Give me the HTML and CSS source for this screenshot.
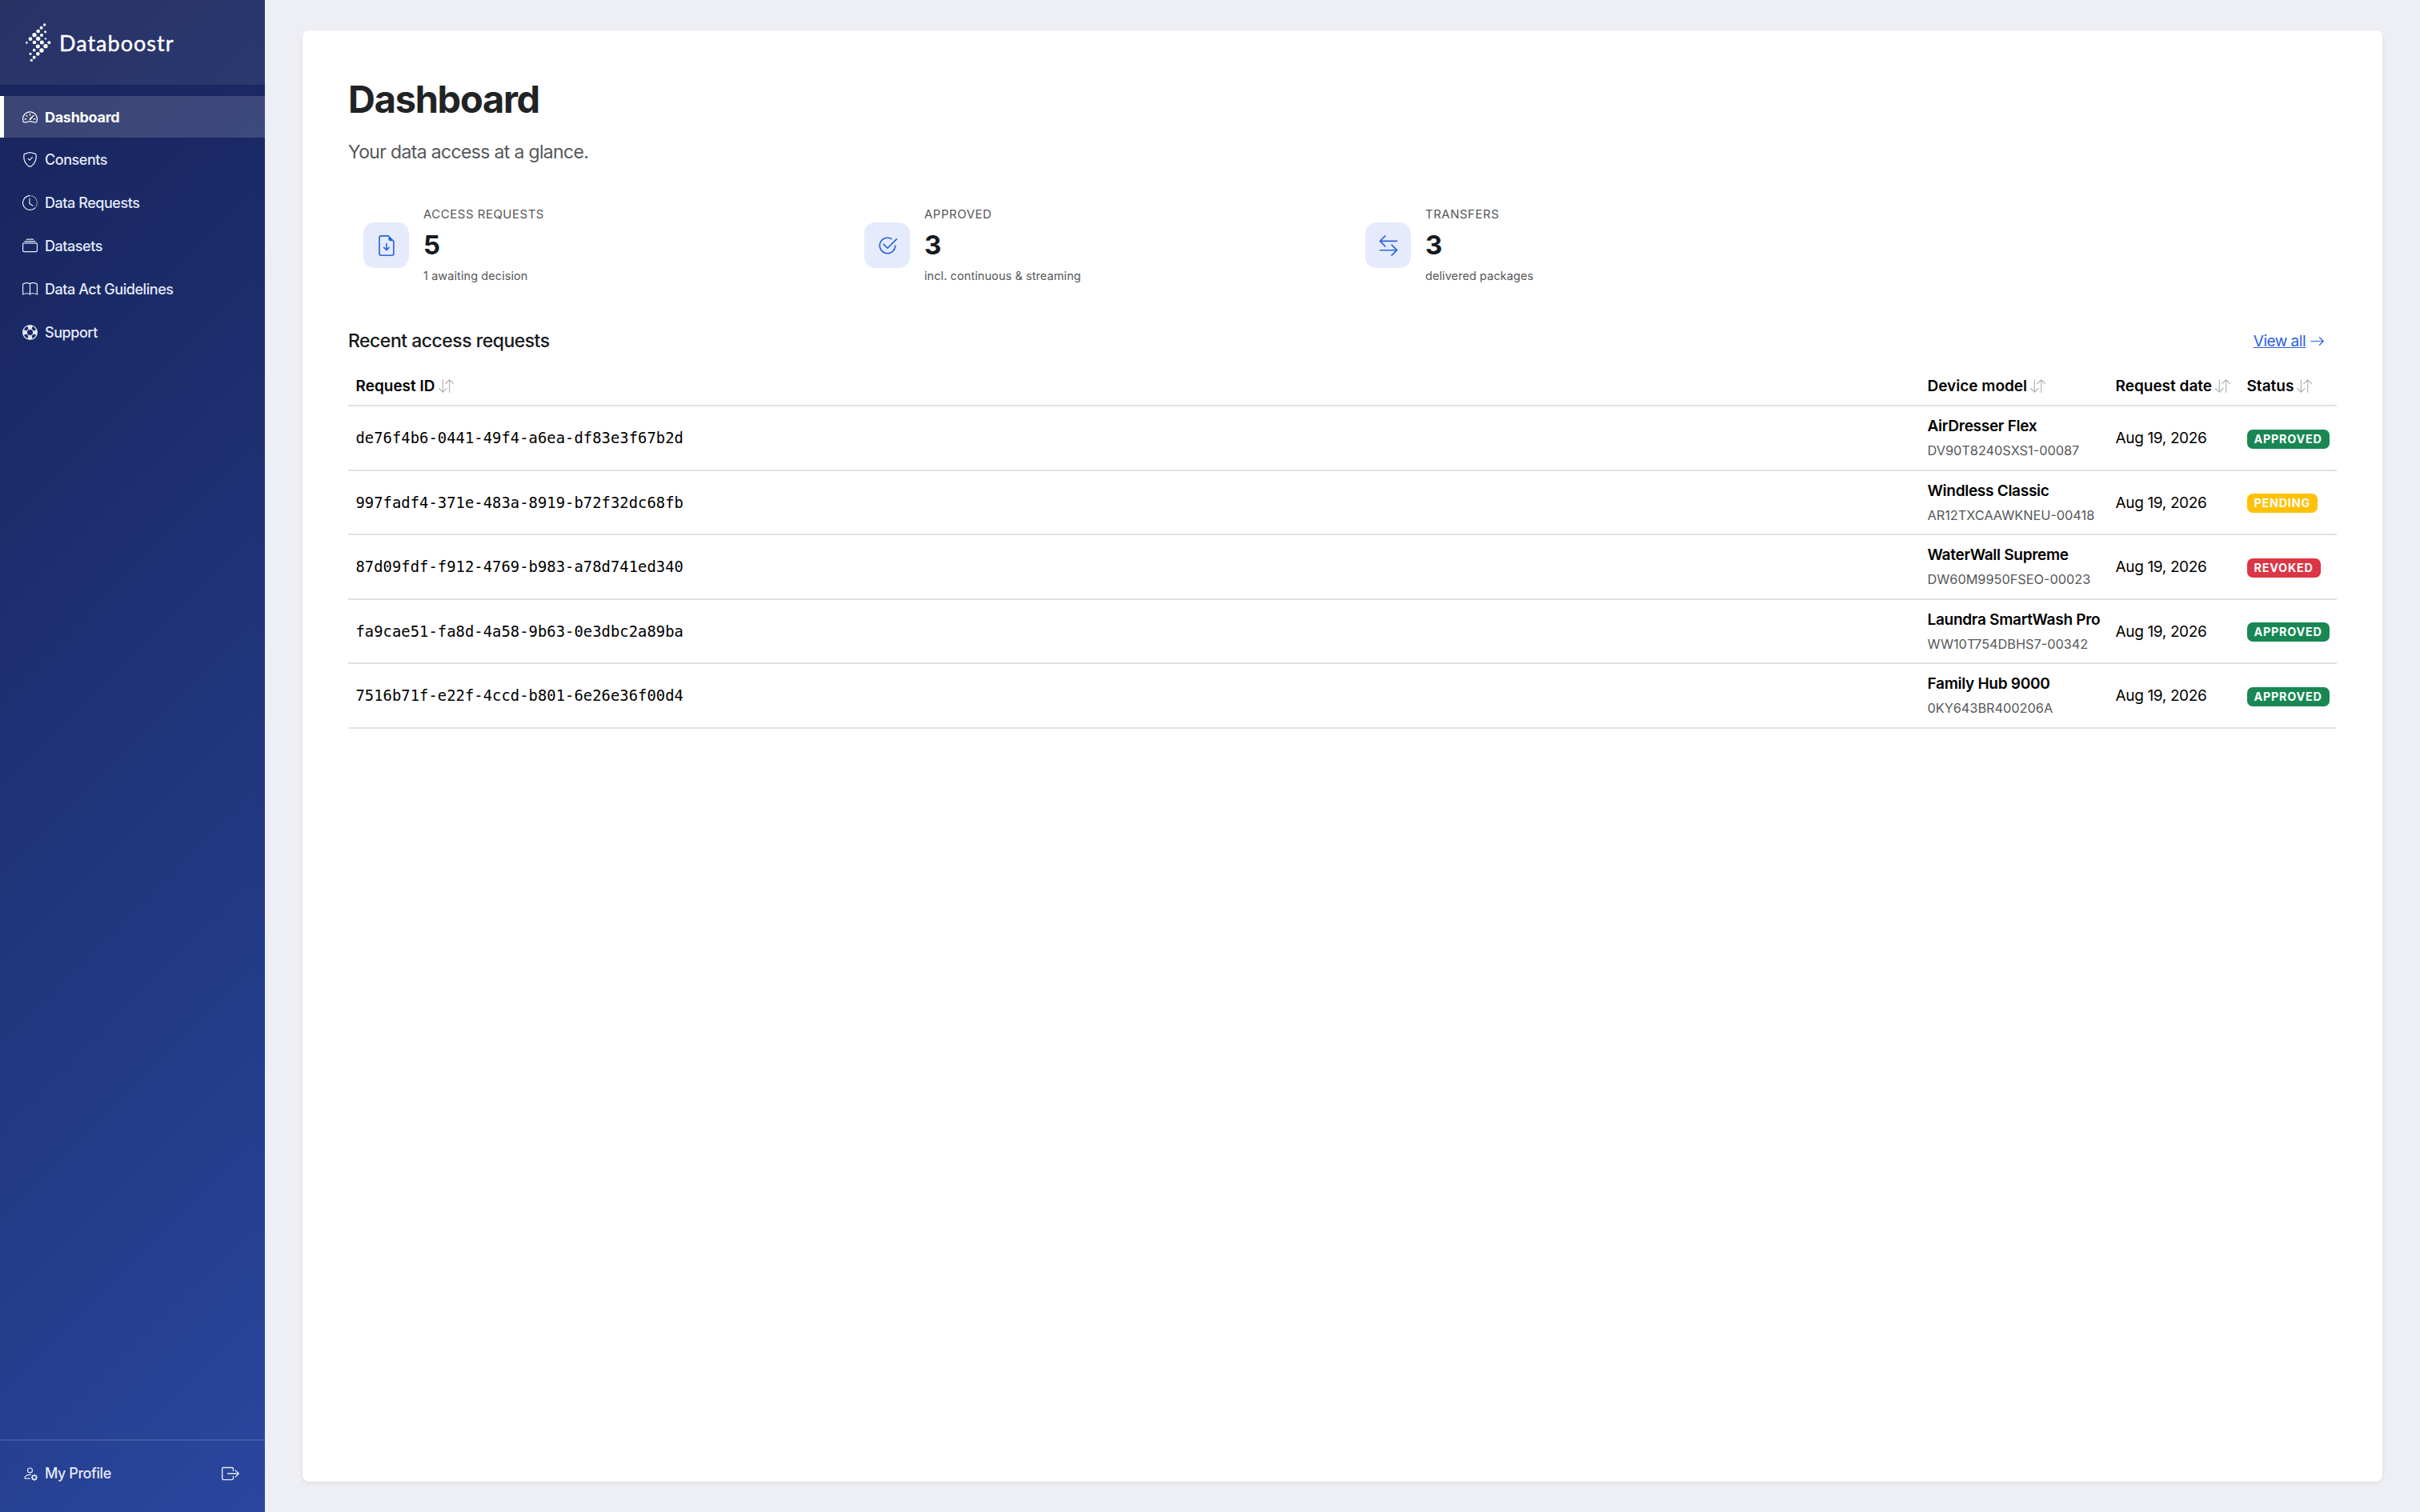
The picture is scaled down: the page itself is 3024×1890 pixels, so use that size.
FILE: index.html
```html
<!DOCTYPE html>
<html lang="en">
<head>
  <meta charset="UTF-8" />
  <meta name="viewport" content="width=device-width, initial-scale=1.0" />
  <title>Dashboard - Databoostr</title>
  <link rel="stylesheet" href="styles.css">
</head>
<body>

  <!-- Icon sprite -->
  <svg class="sprite" xmlns="http://www.w3.org/2000/svg">
    <symbol id="speedometer" viewBox="0 0 16 16">
      <path d="M8 4a.5.5 0 0 1 .5.5V6a.5.5 0 0 1-1 0V4.5A.5.5 0 0 1 8 4M3.732 5.732a.5.5 0 0 1 .707 0l.915.914a.5.5 0 1 1-.708.708l-.914-.915a.5.5 0 0 1 0-.707M2 10a.5.5 0 0 1 .5-.5h1.586a.5.5 0 0 1 0 1H2.5A.5.5 0 0 1 2 10m9.5 0a.5.5 0 0 1 .5-.5h1.5a.5.5 0 0 1 0 1H12a.5.5 0 0 1-.5-.5m.754-4.246a.39.39 0 0 0-.527-.02L7.547 9.31a.91.91 0 1 0 1.302 1.258l3.434-4.297a.39.39 0 0 0-.029-.518z"/>
      <path fill-rule="evenodd" d="M0 10a8 8 0 1 1 15.547 2.661c-.442 1.253-1.845 1.602-2.932 1.25C11.309 13.488 9.475 13 8 13c-1.474 0-3.31.488-4.615.911-1.087.352-2.49.003-2.932-1.25A8 8 0 0 1 0 10m8-7a7 7 0 0 0-6.603 9.329c.203.575.923.876 1.68.63C4.397 12.533 6.358 12 8 12s3.604.532 4.923.96c.757.245 1.477-.056 1.68-.631A7 7 0 0 0 8 3"/>
    </symbol>
    <symbol id="shield" viewBox="0 0 16 16">
      <path d="M5.338 1.59a61 61 0 0 0-2.837.856.48.48 0 0 0-.328.39c-.554 4.157.726 7.19 2.253 9.188a10.7 10.7 0 0 0 2.287 2.233c.346.244.652.42.893.533q.18.085.293.118a1 1 0 0 0 .101.025 1 1 0 0 0 .1-.025q.114-.034.294-.118c.24-.113.547-.29.893-.533a10.7 10.7 0 0 0 2.287-2.233c1.527-1.997 2.807-5.031 2.253-9.188a.48.48 0 0 0-.328-.39c-.651-.213-1.75-.56-2.837-.855C9.552 1.29 8.531 1.067 8 1.067c-.53 0-1.552.223-2.662.524zM5.072.56C6.157.265 7.31 0 8 0s1.843.265 2.928.56c1.11.3 2.229.655 2.887.87a1.54 1.54 0 0 1 1.044 1.262c.596 4.477-.787 7.795-2.465 9.99a11.8 11.8 0 0 1-2.517 2.453 7 7 0 0 1-1.048.625c-.28.132-.581.24-.829.24s-.548-.108-.829-.24a7 7 0 0 1-1.048-.625 11.8 11.8 0 0 1-2.517-2.453C1.928 10.487.545 7.169 1.141 2.692A1.54 1.54 0 0 1 2.185 1.43 63 63 0 0 1 5.072.56"/>
      <path d="M10.854 5.146a.5.5 0 0 1 0 .708l-3 3a.5.5 0 0 1-.708 0l-1.5-1.5a.5.5 0 1 1 .708-.708L7.5 7.793l2.646-2.647a.5.5 0 0 1 .708 0"/>
    </symbol>
    <symbol id="history" viewBox="0 0 16 16">
      <path d="M8.515 1.019A7 7 0 0 0 8 1V0a8 8 0 0 1 .589.022zm2.004.45a7 7 0 0 0-.985-.299l.219-.976q.576.129 1.126.342zm1.37.71a7 7 0 0 0-.439-.27l.493-.87a8 8 0 0 1 .979.654l-.615.789a7 7 0 0 0-.418-.302zm1.834 1.79a7 7 0 0 0-.653-.796l.724-.69q.406.429.747.91zm.744 1.352a7 7 0 0 0-.214-.468l.893-.45a8 8 0 0 1 .45 1.088l-.95.313a7 7 0 0 0-.179-.483m.53 2.507a7 7 0 0 0-.1-1.025l.985-.17q.1.58.116 1.17zm-.131 1.538q.05-.254.081-.51l.993.123a8 8 0 0 1-.23 1.155l-.964-.267q.069-.247.12-.501m-.952 2.379q.276-.436.486-.908l.914.405q-.24.54-.555 1.038zm-.964 1.205q.183-.183.35-.378l.758.653a8 8 0 0 1-.401.432z"/>
      <path d="M8 1a7 7 0 1 0 4.95 11.95l.707.707A8.001 8.001 0 1 1 8 0z"/>
      <path d="M7.5 3a.5.5 0 0 1 .5.5v5.21l3.248 1.856a.5.5 0 0 1-.496.868l-3.5-2A.5.5 0 0 1 7 9V3.5a.5.5 0 0 1 .5-.5"/>
    </symbol>
    <symbol id="collection" viewBox="0 0 16 16">
      <path d="M2.5 3.5a.5.5 0 0 1 0-1h11a.5.5 0 0 1 0 1zm2-2a.5.5 0 0 1 0-1h7a.5.5 0 0 1 0 1zM0 13a1.5 1.5 0 0 0 1.5 1.5h13A1.5 1.5 0 0 0 16 13V6a1.5 1.5 0 0 0-1.5-1.5h-13A1.5 1.5 0 0 0 0 6zm1.5.5A.5.5 0 0 1 1 13V6a.5.5 0 0 1 .5-.5h13a.5.5 0 0 1 .5.5v7a.5.5 0 0 1-.5.5z"/>
    </symbol>
    <symbol id="book" viewBox="0 0 16 16">
      <path d="M1 2.828c.885-.37 2.154-.769 3.388-.893 1.33-.134 2.458.063 3.112.752v9.746c-.935-.53-2.12-.603-3.213-.493-1.18.12-2.37.461-3.287.811zm7.5-.141c.654-.689 1.782-.886 3.112-.752 1.234.124 2.503.523 3.388.893v9.923c-.918-.35-2.107-.692-3.287-.81-1.094-.111-2.278-.039-3.213.492zM8 1.783C7.015.936 5.587.81 4.287.94c-1.514.153-3.042.672-3.994 1.105A.5.5 0 0 0 0 2.5v11a.5.5 0 0 0 .707.455c.882-.4 2.303-.881 3.68-1.02 1.409-.142 2.59.087 3.223.877a.5.5 0 0 0 .78 0c.633-.79 1.814-1.019 3.222-.877 1.378.139 2.8.62 3.681 1.02A.5.5 0 0 0 16 13.5v-11a.5.5 0 0 0-.293-.455c-.952-.433-2.48-.952-3.994-1.105C10.413.809 8.985.936 8 1.783"/>
    </symbol>
    <symbol id="preserver" viewBox="0 0 16 16">
      <path d="M8 16A8 8 0 1 0 8 0a8 8 0 0 0 0 16m6.43-5.228a7.03 7.03 0 0 1-3.658 3.658l-1.115-2.788a4 4 0 0 0 1.985-1.985zM5.228 14.43a7.03 7.03 0 0 1-3.658-3.658l2.788-1.115a4 4 0 0 0 1.985 1.985zm9.202-9.202-2.788 1.115a4 4 0 0 0-1.985-1.985l1.115-2.788a7.03 7.03 0 0 1 3.658 3.658m-8.087-.87a4 4 0 0 0-1.985 1.985L1.57 5.228A7.03 7.03 0 0 1 5.228 1.57zM8 11a3 3 0 1 1 0-6 3 3 0 0 1 0 6"/>
    </symbol>
    <symbol id="person" viewBox="0 0 16 16">
      <path d="M11 5a3 3 0 1 1-6 0 3 3 0 0 1 6 0M8 7a2 2 0 1 0 0-4 2 2 0 0 0 0 4m.256 7a4.5 4.5 0 0 1-.229-1.004H3c.001-.246.154-.986.832-1.664C4.484 10.68 5.711 10 8 10q.39 0 .74.025c.226-.341.496-.65.804-.918Q8.844 9.002 8 9c-5 0-6 3-6 4s1 1 1 1zm3.63-4.54c.18-.613 1.048-.613 1.229 0l.043.148a.64.64 0 0 0 .921.382l.136-.074c.561-.306 1.175.308.87.869l-.075.136a.64.64 0 0 0 .382.92l.149.045c.612.18.612 1.048 0 1.229l-.15.043a.64.64 0 0 0-.38.921l.074.136c.305.561-.309 1.175-.87.87l-.136-.075a.64.64 0 0 0-.92.382l-.045.149c-.18.612-1.048.612-1.229 0l-.043-.15a.64.64 0 0 0-.921-.38l-.136.074c-.561.305-1.175-.309-.87-.87l.075-.136a.64.64 0 0 0-.382-.92l-.148-.045c-.613-.18-.613-1.048 0-1.229l.148-.043a.64.64 0 0 0 .382-.921l-.074-.136c-.306-.561.308-1.175.869-.87l.136.075a.64.64 0 0 0 .92-.382zM14 12.5a1.5 1.5 0 1 0-3 0 1.5 1.5 0 0 0 3 0"/>
    </symbol>
    <symbol id="logout" viewBox="0 0 16 16">
      <path fill-rule="evenodd" d="M10 12.5a.5.5 0 0 1-.5.5h-8a.5.5 0 0 1-.5-.5v-9a.5.5 0 0 1 .5-.5h8a.5.5 0 0 1 .5.5v2a.5.5 0 0 0 1 0v-2A1.5 1.5 0 0 0 9.5 2h-8A1.5 1.5 0 0 0 0 3.5v9A1.5 1.5 0 0 0 1.5 14h8a1.5 1.5 0 0 0 1.5-1.5v-2a.5.5 0 0 0-1 0z"/>
      <path d="M15.854 8.354a.5.5 0 0 0 0-.708l-3-3a.5.5 0 0 0-.708.708L14.293 7.5H5.5a.5.5 0 0 0 0 1h8.793l-2.147 2.146a.5.5 0 0 0 .708.708z"/>
    </symbol>
    <symbol id="file-down" viewBox="0 0 16 16">
      <path d="M8.5 6.5a.5.5 0 0 0-1 0v3.793L6.354 9.146a.5.5 0 1 0-.708.708l2 2a.5.5 0 0 0 .708 0l2-2a.5.5 0 0 0-.708-.708L8.5 10.293z"/>
      <path d="M14 14V4.5L9.5 0H4a2 2 0 0 0-2 2v12a2 2 0 0 0 2 2h8a2 2 0 0 0 2-2M9.5 3A1.5 1.5 0 0 0 11 4.5h2V14a1 1 0 0 1-1 1H4a1 1 0 0 1-1-1V2a1 1 0 0 1 1-1h5.5z"/>
    </symbol>
    <symbol id="check" viewBox="0 0 16 16">
      <path d="M2.5 8a5.5 5.5 0 0 1 8.25-4.764.5.5 0 0 0 .5-.866A6.5 6.5 0 1 0 14.5 8a.5.5 0 0 0-1 0 5.5 5.5 0 1 1-11 0"/>
      <path d="M15.354 3.354a.5.5 0 0 0-.708-.708L8 9.293 5.354 6.646a.5.5 0 1 0-.708.708l3 3a.5.5 0 0 0 .708 0z"/>
    </symbol>
    <symbol id="transfer" viewBox="0 0 16 16">
      <path d="M1 11.5a.5.5 0 0 0 .5.5h11.793l-3.147 3.146a.5.5 0 0 0 .708.708l4-4a.5.5 0 0 0 0-.708l-4-4a.5.5 0 0 0-.708.708L13.293 11H1.5a.5.5 0 0 0-.5.5m14-7a.5.5 0 0 1-.5.5H2.707l3.147 3.146a.5.5 0 1 1-.708.708l-4-4a.5.5 0 0 1 0-.708l4-4a.5.5 0 1 1 .708.708L2.707 4H14.5a.5.5 0 0 1 .5.5"/>
    </symbol>
    <symbol id="sort" viewBox="0 0 16 16">
      <path d="M11.5 15a.5.5 0 0 0 .5-.5V2.707l3.146 3.147a.5.5 0 0 0 .708-.708l-4-4a.5.5 0 0 0-.708 0l-4 4a.5.5 0 1 0 .708.708L11 2.707V14.5a.5.5 0 0 0 .5.5m-7-14a.5.5 0 0 1 .5.5v11.793l3.146-3.147a.5.5 0 0 1 .708.708l-4 4a.5.5 0 0 1-.708 0l-4-4a.5.5 0 0 1 .708-.708L4 13.293V1.5a.5.5 0 0 1 .5-.5"/>
    </symbol>
    <symbol id="arrow" viewBox="0 0 16 16">
      <path d="M1 8a.5.5 0 0 1 .5-.5h11.793l-3.147-3.146a.5.5 0 0 1 .708-.708l4 4a.5.5 0 0 1 0 .708l-4 4a.5.5 0 0 1-.708-.708L13.293 8.5H1.5A.5.5 0 0 1 1 8"/>
    </symbol>
  </svg>

  <aside class="sidebar">
    <div class="brand">
      <svg class="brand-mark" viewBox="0 0 96 144">
        <circle cx="71" cy="6" r="5"/><circle cx="59" cy="17" r="6"/><circle cx="47" cy="30" r="7"/>
        <circle cx="33" cy="44" r="8"/><circle cx="18" cy="59" r="7"/><circle cx="4" cy="73" r="4"/>
        <circle cx="74" cy="32" r="4.5"/><circle cx="60" cy="45" r="6"/><circle cx="47" cy="58" r="8"/>
        <circle cx="33" cy="72" r="7"/>
        <circle cx="75" cy="58" r="3.5"/><circle cx="61" cy="72" r="7.5"/><circle cx="46" cy="87" r="7.5"/>
        <circle cx="32" cy="101" r="5.5"/><circle cx="18" cy="115" r="4.5"/>
        <circle cx="88" cy="73" r="6"/><circle cx="75" cy="86" r="8"/><circle cx="60" cy="102" r="8"/>
        <circle cx="46" cy="115" r="7"/><circle cx="32" cy="128" r="6"/><circle cx="22" cy="139" r="5"/>
      </svg>
      <span class="brand-name">Databoostr</span>
    </div>

    <nav class="menu">
      <a href="#" class="active"><svg class="icon"><use href="#speedometer"/></svg>Dashboard</a>
      <a href="#"><svg class="icon"><use href="#shield"/></svg>Consents</a>
      <a href="#"><svg class="icon"><use href="#history"/></svg>Data Requests</a>
      <a href="#"><svg class="icon"><use href="#collection"/></svg>Datasets</a>
      <a href="#"><svg class="icon"><use href="#book"/></svg>Data Act Guidelines</a>
      <a href="#"><svg class="icon"><use href="#preserver"/></svg>Support</a>
    </nav>

    <div class="account">
      <a href="#"><svg class="icon"><use href="#person"/></svg>My Profile</a>
      <a href="#" class="logout"><svg><use href="#logout"/></svg></a>
    </div>
  </aside>

  <main class="panel">
    <h1>Dashboard</h1>
    <p class="lead">Your data access at a glance.</p>

    <!-- Stats -->
    <section class="stats">
      <div class="stat">
        <div class="stat-icon"><svg><use href="#file-down"/></svg></div>
        <div>
          <div class="stat-label">Access requests</div>
          <div class="stat-value">5</div>
          <div class="stat-note">1 awaiting decision</div>
        </div>
      </div>
      <div class="stat">
        <div class="stat-icon"><svg><use href="#check"/></svg></div>
        <div>
          <div class="stat-label">Approved</div>
          <div class="stat-value">3</div>
          <div class="stat-note">incl. continuous &amp; streaming</div>
        </div>
      </div>
      <div class="stat">
        <div class="stat-icon"><svg><use href="#transfer"/></svg></div>
        <div>
          <div class="stat-label">Transfers</div>
          <div class="stat-value">3</div>
          <div class="stat-note">delivered packages</div>
        </div>
      </div>
    </section>

    <!-- Recent requests -->
    <div class="section-head">
      <h2>Recent access requests</h2>
      <a href="#" class="view-all"><span>View all</span><svg><use href="#arrow"/></svg></a>
    </div>

    <table class="requests">
      <colgroup>
        <col class="col-id"><col class="col-device"><col class="col-date"><col class="col-status">
      </colgroup>
      <thead>
        <tr>
          <th>Request ID<svg><use href="#sort"/></svg></th>
          <th>Device model<svg><use href="#sort"/></svg></th>
          <th>Request date<svg><use href="#sort"/></svg></th>
          <th>Status<svg><use href="#sort"/></svg></th>
        </tr>
      </thead>
      <tbody>
        <tr>
          <td class="request-id">de76f4b6-0441-49f4-a6ea-df83e3f67b2d</td>
          <td><div class="device">AirDresser Flex</div><div class="serial">DV90T8240SXS1-00087</div></td>
          <td class="date">Aug 19, 2026</td>
          <td><span class="badge approved">Approved</span></td>
        </tr>
        <tr>
          <td class="request-id">997fadf4-371e-483a-8919-b72f32dc68fb</td>
          <td><div class="device">Windless Classic</div><div class="serial">AR12TXCAAWKNEU-00418</div></td>
          <td class="date">Aug 19, 2026</td>
          <td><span class="badge pending">Pending</span></td>
        </tr>
        <tr>
          <td class="request-id">87d09fdf-f912-4769-b983-a78d741ed340</td>
          <td><div class="device">WaterWall Supreme</div><div class="serial">DW60M9950FSEO-00023</div></td>
          <td class="date">Aug 19, 2026</td>
          <td><span class="badge revoked">Revoked</span></td>
        </tr>
        <tr>
          <td class="request-id">fa9cae51-fa8d-4a58-9b63-0e3dbc2a89ba</td>
          <td><div class="device">Laundra SmartWash Pro</div><div class="serial">WW10T754DBHS7-00342</div></td>
          <td class="date">Aug 19, 2026</td>
          <td><span class="badge approved">Approved</span></td>
        </tr>
        <tr>
          <td class="request-id">7516b71f-e22f-4ccd-b801-6e26e36f00d4</td>
          <td><div class="device">Family Hub 9000</div><div class="serial">0KY643BR400206A</div></td>
          <td class="date">Aug 19, 2026</td>
          <td><span class="badge approved">Approved</span></td>
        </tr>
      </tbody>
    </table>
  </main>

</body>
</html>
```
FILE: styles.css
```css
* {
  box-sizing: border-box;
}

body {
  margin: 0;
  height: 100vh;
  display: flex;
  background: #edeff4;
  color: #000;
  font-family: Inter, sans-serif;
  font-size: 19px;
}

svg {
  fill: currentColor;
  flex-shrink: 0;
}

.sprite {
  display: none;
}

/* Sidebar */
.sidebar {
  width: 331px;
  height: 100%;
  flex-shrink: 0;
  display: flex;
  flex-direction: column;
  background: linear-gradient(135deg, #18235a 0%, #1b2b68 25%, #2a469e 100%);
  color: #e4e9f8;
}

.brand {
  height: 106px;
  padding: 0 0 0 32px;
  display: flex;
  align-items: center;
  gap: 10px;
  background: rgba(255, 255, 255, 0.07);
  color: #fff;
}

.brand-mark {
  width: 32px;
  height: 48px;
}

.brand-name {
  font-family: Lato, sans-serif;
  font-size: 27px;
  letter-spacing: 1px;
  -webkit-text-stroke: 0.4px #fff;
}

.menu {
  flex: 1;
  padding-top: 14px;
  display: flex;
  flex-direction: column;
  gap: 1.9px;
}

.menu a,
.account a {
  color: inherit;
  text-decoration: none;
  font-size: 18px;
  font-weight: 500;
  letter-spacing: -0.45px;
  display: flex;
  align-items: center;
  gap: 9px;
}

.menu a {
  height: 52px;
  padding-left: 23px;
  border-left: 5px solid transparent;
}

.menu a.active {
  background: rgba(255, 255, 255, 0.15);
  border-left-color: #fff;
  color: #fff;
  font-weight: 700;
  letter-spacing: -0.3px;
}

.icon {
  width: 19px;
  height: 19px;
}

.account {
  height: 91px;
  padding: 0 32px 8px 28px;
  display: flex;
  align-items: center;
  justify-content: space-between;
  border-top: 2px solid rgba(255, 255, 255, 0.12);
}

.logout svg {
  width: 22px;
  height: 22px;
}

/* Content */
.panel {
  flex: 1;
  margin: 38px 47px 38px 47px;
  padding: 57px;
  background: #fff;
  border-radius: 8px;
  box-shadow: 0 2px 5px rgba(0, 0, 0, 0.08);
}

h1 {
  margin: 0;
  font-size: 47px;
  line-height: 58px;
  letter-spacing: -1.3px;
  color: #212324;
}

.lead {
  margin: 21px 0 0;
  font-size: 23px;
  line-height: 32px;
  letter-spacing: -0.66px;
  color: #55585a;
}

.stats {
  margin-top: 51px;
  display: grid;
  grid-template-columns: repeat(3, 626px);
}

.stat {
  padding-left: 19px;
  display: flex;
  align-items: center;
  gap: 18px;
}

.stat-icon {
  width: 57px;
  height: 57px;
  border-radius: 14px;
  background: #e5ebfd;
  color: #2a62dd;
  display: flex;
  align-items: center;
  justify-content: center;
}

.stat-icon svg {
  width: 26px;
  height: 26px;
}

.stat-label {
  font-size: 15px;
  line-height: 22px;
  letter-spacing: 0.5px;
  text-transform: uppercase;
  color: #55585a;
}

.stat-value {
  margin: 9px 0 10px;
  font-size: 33px;
  line-height: 36px;
  font-weight: 700;
  color: #16191c;
}

.stat-note {
  font-size: 14.5px;
  line-height: 22px;
  letter-spacing: 0.08px;
  color: #55585a;
}

.section-head {
  margin-top: 55px;
  padding-right: 15px;
  height: 30px;
  display: flex;
  align-items: center;
  justify-content: space-between;
}

h2 {
  margin: 0;
  font-size: 23px;
  font-weight: 500;
  letter-spacing: -0.5px;
  color: #16191c;
}

.view-all {
  display: flex;
  align-items: center;
  gap: 5px;
  color: #2a62dd;
  letter-spacing: -0.5px;
  text-decoration: none;
}

.view-all span {
  text-decoration: underline;
}

.view-all svg {
  width: 19px;
  height: 19px;
}

/* Table */
.requests {
  width: 100%;
  margin-top: 16px;
  table-layout: fixed;
  border-collapse: collapse;
  text-align: left;
}

.col-device {
  width: 235px;
}

.col-date {
  width: 164px;
}

.col-status {
  width: 122px;
}

.requests th,
.requests td {
  padding: 0 0 0 9.5px;
  border-bottom: 2px solid #e0e2e4;
  white-space: nowrap;
}

.requests th {
  height: 50px;
  padding-top: 2px;
  font-weight: 600;
}

.requests th svg {
  width: 19px;
  height: 19px;
  margin-left: 4px;
  vertical-align: -3px;
  color: #b5b5b5;
}

.requests td {
  height: 80.5px;
}

.requests .request-id {
  font-family: "DejaVu Sans Mono", monospace;
  font-size: 18.9px;
}

.requests .date {
  padding-top: 1px;
  letter-spacing: -0.35px;
}

.device {
  font-weight: 600;
  line-height: 28px;
  letter-spacing: -0.28px;
}

.serial {
  margin-top: 4px;
  font-size: 16.3px;
  line-height: 24px;
  color: #55585a;
}

.badge {
  display: inline-block;
  margin-top: 3px;
  padding: 0 9px;
  border-radius: 7px;
  color: #fff;
  font-size: 14.3px;
  font-weight: 700;
  line-height: 24px;
  letter-spacing: 0.8px;
  text-transform: uppercase;
}

.approved {
  background: #198754;
}

.pending {
  background: #ffc107;
}

.revoked {
  background: #dc3545;
}
```
